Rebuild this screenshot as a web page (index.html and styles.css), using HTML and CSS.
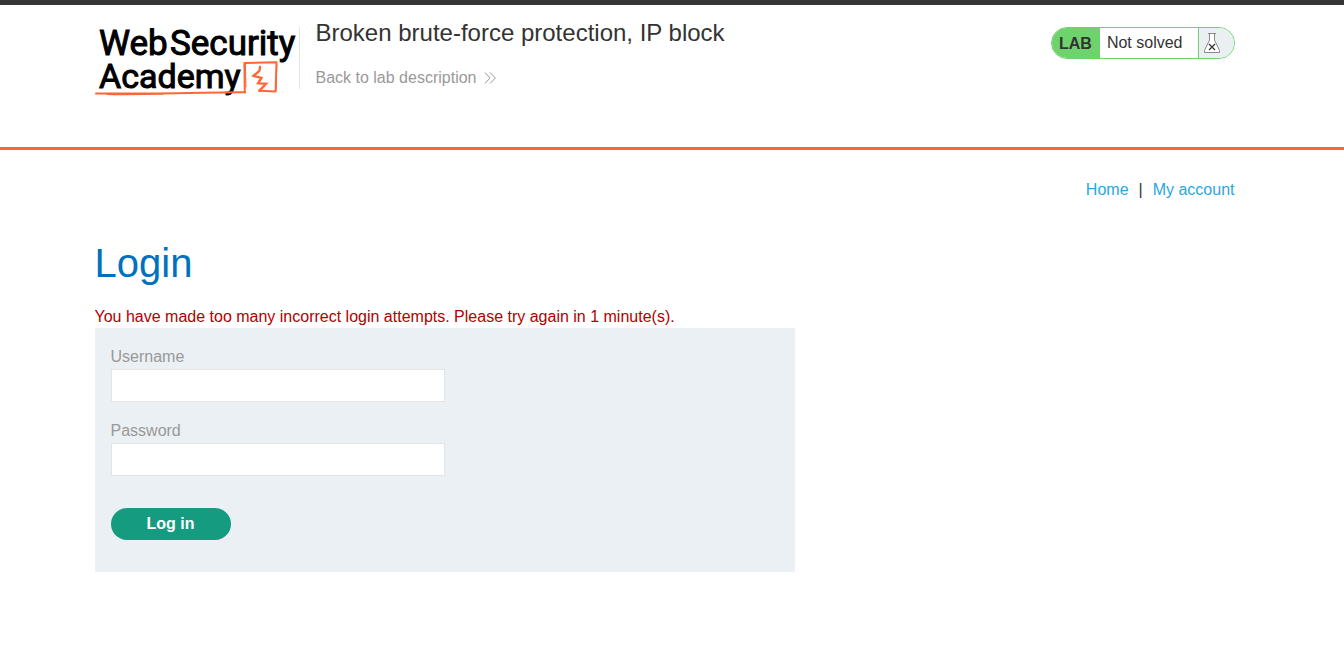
FILE: index.html
```html
<!DOCTYPE html>
<html lang="en">
<head>
<meta charset="utf-8">
<meta name="viewport" content="width=device-width, initial-scale=1">
<title>Broken brute-force protection, IP block</title>
<link rel="stylesheet" href="styles.css">
</head>
<body>
<header class="lab-header">
  <div class="container lab-header-row">
    <a class="logo" href="#" aria-label="Web Security Academy">
      <svg width="200" height="70" viewBox="0 0 200 70">
        <g class="logo-text">
          <text class="logo-top" x="4" y="28">Web</text>
          <text class="logo-top" x="75" y="28">Security</text>
          <text x="4" y="61">Academy</text>
        </g>
        <g fill="none" stroke="#ff6633" stroke-linejoin="round" stroke-linecap="round">
          <path stroke-width="2" d="M149.8 65.5 L149.4 36 L181.5 35.2 L180.6 64.4 L164 63.8"/>
          <path stroke-width="1" d="M151 60 L150.4 36.8 M181.8 37 L181 63"/>
          <path stroke-width="2" d="M150 65.3 C122 65 92 66.6 60 66.4 C38 66.8 18 66.4 1 66.6"/>
          <path stroke-width="1.2" d="M12 67.4 C30 68 48 67.4 68 67"/>
          <path stroke-width="2.3" stroke-linejoin="miter" d="M165 40 L164.4 44 L158.5 48.8 L166.5 51 L163 56.3 L171 56.8 L164.5 63.6"/>
        </g>
      </svg>
    </a>
    <div class="title-block">
      <h2 class="lab-title">Broken brute-force protection, IP block</h2>
      <a class="back-link" href="#">Back to lab description
        <svg width="12" height="12" viewBox="0 0 12 12" fill="none" stroke="#999" stroke-width="1" aria-hidden="true">
          <path d="M1 .5 6 6 1 11.5M6 .5 11.4 6 6 11.5"/>
        </svg>
      </a>
    </div>
    <div class="lab-status">
      <span class="lab-tag">LAB</span>
      <p class="lab-state">Not solved</p>
      <span class="lab-flask">
        <svg width="18" height="22" viewBox="0 0 18 22" fill="none" aria-hidden="true">
          <path fill="#fff" stroke="#888" d="M6.5 1.5V8L1.5 18.5V20.5H16.5V18.5L11.5 8V1.5"/>
          <path stroke="#888" d="M5 1.5H13"/>
          <path stroke="#333" stroke-width="1.3" d="M6 12 12 18M12 12 6 18"/>
        </svg>
      </span>
    </div>
  </div>
</header>
<main class="page">
  <div class="container">
    <nav class="top-links">
      <a href="#">Home</a><span>|</span><a href="#">My account</a>
    </nav>
    <h1 class="heading">Login</h1>
    <p class="warning">You have made too many incorrect login attempts. Please try again in 1 minute(s).</p>
    <form class="login-form">
      <label class="field-label" for="username">Username</label>
      <input class="field" id="username" name="username" type="text">
      <label class="field-label" for="password">Password</label>
      <input class="field" id="password" name="password" type="password">
      <button class="submit" type="submit">Log in</button>
    </form>
  </div>
</main>
</body>
</html>
```

FILE: styles.css
```css
* {
  box-sizing: border-box;
}

body {
  margin: 0;
  background: #fff;
  color: #333332;
  font: 16px/20px "Liberation Sans", Arial, sans-serif;
}

h1, h2, p {
  margin: 0;
  font-weight: normal;
}

a {
  color: #29a7df;
  text-decoration: none;
}

.lab-header {
  padding: 14px 15px 0 0;
  border-top: 5px solid #353535;
  border-bottom: 3px solid #ff6633;
}

.container {
  max-width: 1140px;
  margin: 0 auto;
}

.lab-header-row {
  display: flex;
  align-items: flex-start;
  padding-bottom: 50px;
}

.logo {
  padding-top: 8px;
}

.logo svg {
  display: block;
  overflow: visible;
}

.logo-text {
  fill: #000;
  stroke: #000;
  stroke-width: 1;
  font-family: Roboto, sans-serif;
  font-size: 34px;
}

.logo-top {
  font-size: 35px;
}

.title-block {
  flex: 1;
  margin-left: 4px;
  padding-left: 17px;
  background: linear-gradient(#e4e4e4, #e4e4e4) 0 8px / 1px 62px no-repeat;
  min-height: 70px;
}

.lab-title {
  font-size: 24px;
  line-height: 28px;
}

.back-link {
  display: inline-flex;
  align-items: center;
  gap: 8px;
  margin-top: 21px;
  color: #999;
}

.lab-status {
  display: flex;
  height: 32px;
  margin-top: 8px;
  border: 1px solid #6fd36d;
  border-radius: 16px;
  overflow: hidden;
  line-height: 30px;
}

.lab-tag {
  padding: 1px 8px 0 7px;
  background: #6fd36d;
  font-weight: bold;
}

.lab-state {
  padding: 0 15px 0 7px;
}

.lab-flask {
  display: flex;
  align-items: center;
  width: 36px;
  padding-left: 4px;
  border-left: 1px solid #6fd36d;
  background: #eaeff2;
}

.page {
  padding: 30px 15px 32px 0;
}

.top-links {
  display: flex;
  justify-content: flex-end;
  gap: 10px;
}

.heading {
  margin-top: 40px;
  color: #0071bd;
  font-size: 40px;
  line-height: 46px;
}

.warning {
  margin-top: 21px;
  padding-bottom: 1px;
  color: #b20000;
}

.login-form {
  max-width: 700px;
  padding: 19px 16px 32px;
  background: #eaf0f3;
}

.field-label {
  display: block;
  padding-bottom: 2px;
  color: #999;
}

.field {
  display: block;
  width: 50%;
  height: 33px;
  margin-bottom: 19px;
  padding: 4px 8px;
  border: 1px solid #e4e4e4;
  background: #fff;
  font: inherit;
}

.submit {
  display: block;
  width: 120px;
  height: 32px;
  margin-top: 32px;
  padding: 0;
  border: 0;
  border-radius: 16px;
  background: #159b80;
  color: #fff;
  font: bold 16px/32px "Liberation Sans", Arial, sans-serif;
}
```
